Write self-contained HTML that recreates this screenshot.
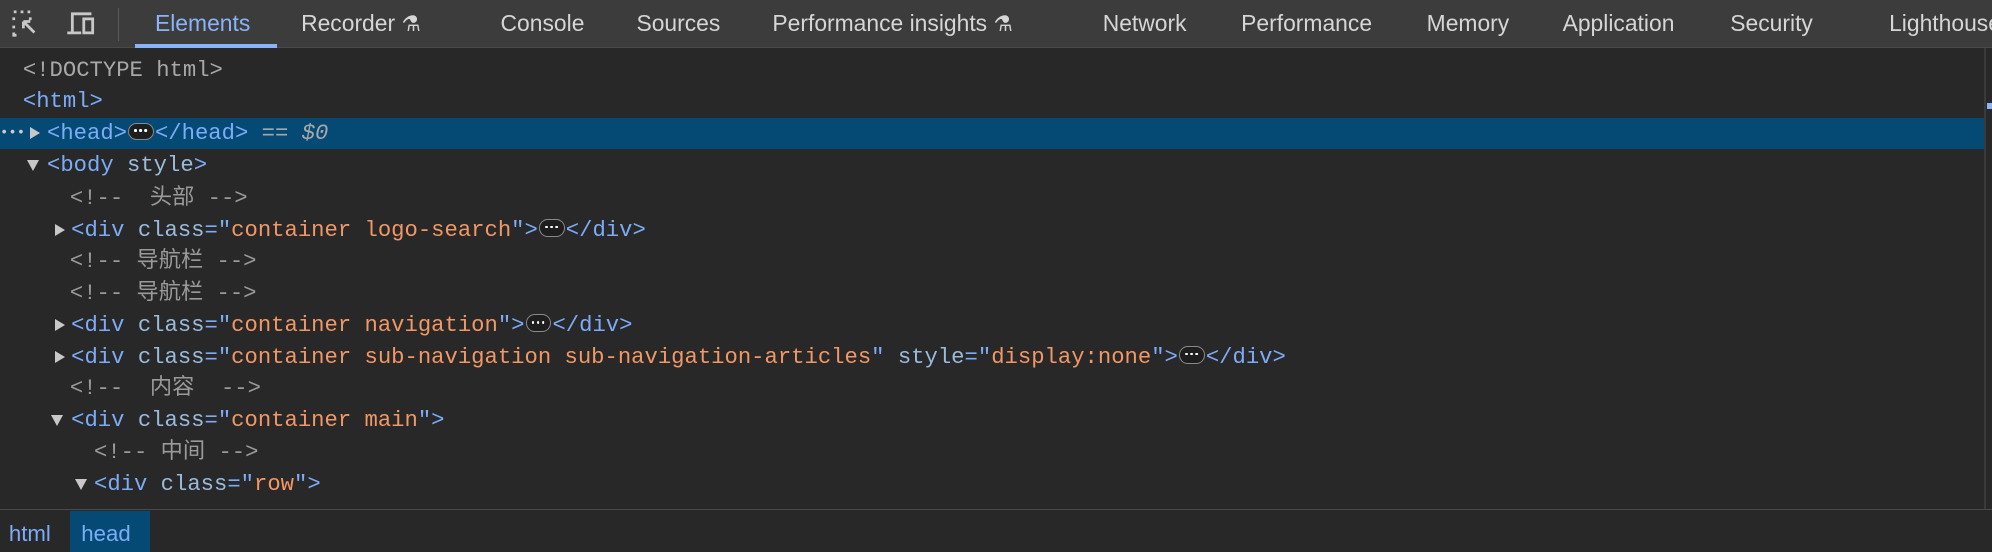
<!DOCTYPE html>
<html><head><meta charset="utf-8"><style>
html,body{margin:0;padding:0;background:#282828;overflow:hidden}
body{width:1992px;height:552px}
#w{zoom:1.2704;width:1568px;height:435px;position:relative;font-family:"Liberation Sans",sans-serif}
.tb{position:absolute;left:0;top:0;width:1568px;height:37px;background:#3c3c3c;border-bottom:1px solid #4a4a4a}
.tab{position:absolute;top:8px;font-size:18px;color:#d6d6d6;white-space:nowrap}
.row{position:absolute;left:0;height:25px;width:1562px;font-family:"Liberation Mono","Noto Sans CJK SC",monospace;font-size:17.5px;line-height:25px;white-space:pre;color:#7cacf8}
.row span.t{position:absolute}
.a{color:#9bbbdc}.v{color:#f29766}.c{color:#9a9a9a}.g{color:#a8a8a8}
.tri{position:absolute;width:0;height:0}
.r{border-top:5px solid transparent;border-bottom:5px solid transparent;border-left:8px solid #c8c8c8;top:7px}
.d{border-left:5px solid transparent;border-right:5px solid transparent;border-top:9px solid #c8c8c8;top:8px}
.e{display:inline-block;width:20px;height:14px;border-radius:7px;background:#1e1e1e;border:1.5px solid #8a8a8a;vertical-align:-1px;margin:0 1px;position:relative;box-sizing:border-box}
.e:after{content:"";position:absolute;left:4px;top:4.5px;width:2px;height:2px;background:#fff;border-radius:1px;box-shadow:4px 0 #fff,8px 0 #fff}
</style></head><body><div id="w">
<div class="tb">
<svg style="position:absolute;left:9px;top:7px" width="26" height="24" viewBox="0 0 24 22" fill="none" stroke="#c8c8c8" stroke-width="2"><path d="M2 2h2M7 2h2M12 2h2M2 6v2M2 12v2M2 17v2h2M14 6v2M9 9l8 8M9 9h5M9 9v5" /></svg>
<svg style="position:absolute;left:52px;top:8px" width="26" height="22" viewBox="0 0 26 22" fill="none" stroke="#c8c8c8" stroke-width="2.2"><path d="M5 17V3h15M1 18h11"/><rect x="14" y="7" width="7" height="11"/></svg>
<div style="position:absolute;left:93px;top:6px;width:1px;height:26px;background:#5a5a5a"></div>
<div class="tab" style="left:122px;color:#8ab4f8">Elements</div>
<div style="position:absolute;left:106px;top:35px;width:112px;height:3px;background:#8ab4f8"></div>
<div class="tab" style="left:237px">Recorder <span style="font-size:17px">⚗</span></div>
<div class="tab" style="left:394px">Console</div>
<div class="tab" style="left:501px">Sources</div>
<div class="tab" style="left:608px">Performance insights <span style="font-size:17px">⚗</span></div>
<div class="tab" style="left:868px">Network</div>
<div class="tab" style="left:977px">Performance</div>
<div class="tab" style="left:1123px">Memory</div>
<div class="tab" style="left:1230px">Application</div>
<div class="tab" style="left:1362px">Security</div>
<div class="tab" style="left:1487px">Lighthouse</div>
</div>
<div style="position:absolute;left:1562px;top:38px;width:1px;height:363px;background:#3a3a3a"></div>
<div style="position:absolute;left:1564px;top:81px;width:4px;height:5px;background:#8ab4f8"></div>

<div class="row" style="top:43px"><span class="t g" style="left:18px">&lt;!DOCTYPE html&gt;</span></div>
<div class="row" style="top:68px"><span class="t" style="left:18px">&lt;html&gt;</span></div>
<div class="row" style="top:93px;background:#044a75;height:24px"><span class="t" style="left:0;color:#ccc;font-size:11px;top:0">•••</span><div class="tri r" style="left:24px"></div><span class="t" style="left:37px">&lt;head&gt;<span class="e"></span>&lt;/head&gt; <span class="g">== <i>$0</i></span></span></div>
<div class="row" style="top:118px"><div class="tri d" style="left:21px"></div><span class="t" style="left:37px">&lt;body <span class="a">style</span>&gt;</span></div>
<div class="row" style="top:144px"><span class="t c" style="left:55px">&lt;!--  头部 --&gt;</span></div>
<div class="row" style="top:169px"><div class="tri r" style="left:43px"></div><span class="t" style="left:56px">&lt;div <span class="a">class</span>="<span class="v">container logo-search</span>"&gt;<span class="e"></span>&lt;/div&gt;</span></div>
<div class="row" style="top:194px"><span class="t c" style="left:55px">&lt;!-- 导航栏 --&gt;</span></div>
<div class="row" style="top:219px"><span class="t c" style="left:55px">&lt;!-- 导航栏 --&gt;</span></div>
<div class="row" style="top:244px"><div class="tri r" style="left:43px"></div><span class="t" style="left:56px">&lt;div <span class="a">class</span>="<span class="v">container navigation</span>"&gt;<span class="e"></span>&lt;/div&gt;</span></div>
<div class="row" style="top:269px"><div class="tri r" style="left:43px"></div><span class="t" style="left:56px">&lt;div <span class="a">class</span>="<span class="v">container sub-navigation sub-navigation-articles</span>" <span class="a">style</span>="<span class="v">display:none</span>"&gt;<span class="e"></span>&lt;/div&gt;</span></div>
<div class="row" style="top:294px"><span class="t c" style="left:55px">&lt;!--  内容  --&gt;</span></div>
<div class="row" style="top:319px"><div class="tri d" style="left:40px"></div><span class="t" style="left:56px">&lt;div <span class="a">class</span>="<span class="v">container main</span>"&gt;</span></div>
<div class="row" style="top:344px"><span class="t c" style="left:74px">&lt;!-- 中间 --&gt;</span></div>
<div class="row" style="top:369px"><div class="tri d" style="left:59px"></div><span class="t" style="left:74px">&lt;div <span class="a">class</span>="<span class="v">row</span>"&gt;</span></div>

<div style="position:absolute;left:0;top:401px;width:1568px;height:34px;background:#282828;border-top:1px solid #4a4a4a"></div>
<div style="position:absolute;left:7px;top:410px;font-size:17.5px;color:#7cacf8">html</div>
<div style="position:absolute;left:55px;top:402px;width:63px;height:33px;background:#044a75"></div>
<div style="position:absolute;left:64px;top:410px;font-size:17.5px;color:#7cacf8">head</div>
</div></body></html>
